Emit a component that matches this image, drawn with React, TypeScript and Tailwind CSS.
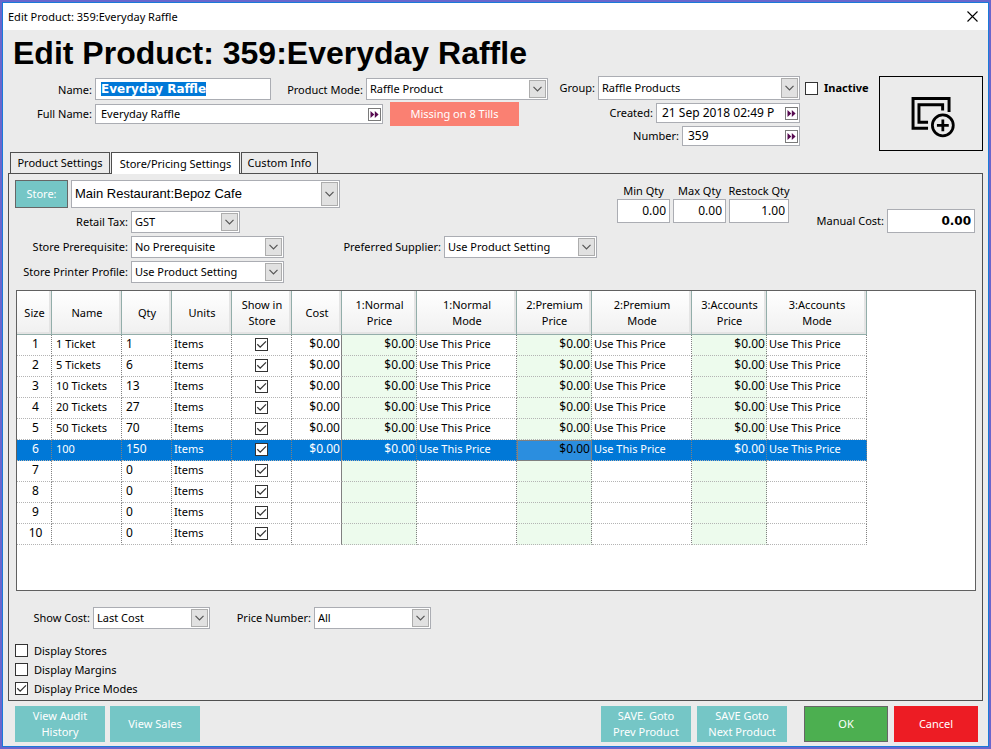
import React, { useEffect, useRef } from "react";

interface PriceRow {
  size: number;
  name: string;
  qty: string;
  units: string;
  priced: boolean;
}

const rows: PriceRow[] = [
  { size: 1, name: "1 Ticket", qty: "1", units: "Items", priced: true },
  { size: 2, name: "5 Tickets", qty: "6", units: "Items", priced: true },
  { size: 3, name: "10 Tickets", qty: "13", units: "Items", priced: true },
  { size: 4, name: "20 Tickets", qty: "27", units: "Items", priced: true },
  { size: 5, name: "50 Tickets", qty: "70", units: "Items", priced: true },
  { size: 6, name: "100", qty: "150", units: "Items", priced: true },
  { size: 7, name: "", qty: "0", units: "Items", priced: false },
  { size: 8, name: "", qty: "0", units: "Items", priced: false },
  { size: 9, name: "", qty: "0", units: "Items", priced: false },
  { size: 10, name: "", qty: "0", units: "Items", priced: false },
];

const SELECTED_SIZE = 6;

const columns = [
  { title: ["Size"], width: "w-[35px]" },
  { title: ["Name"], width: "w-[70px]" },
  { title: ["Qty"], width: "w-[50px]" },
  { title: ["Units"], width: "w-[60px]" },
  { title: ["Show in", "Store"], width: "w-[60px]" },
  { title: ["Cost"], width: "w-[50px]" },
  { title: ["1:Normal", "Price"], width: "w-[75px]" },
  { title: ["1:Normal", "Mode"], width: "w-[100px]" },
  { title: ["2:Premium", "Price"], width: "w-[75px]" },
  { title: ["2:Premium", "Mode"], width: "w-[100px]" },
  { title: ["3:Accounts", "Price"], width: "w-[75px]" },
  { title: ["3:Accounts", "Mode"], width: "w-[100px]" },
];

interface ComboProps {
  id: string;
  value: string;
  className: string;
}

const Combo = ({ id, value, className }: ComboProps) => (
  <div className={`relative shrink-0 border border-[#abadb3] bg-white ${className}`}>
    <select
      id={id}
      defaultValue={value}
      className="block h-full w-full appearance-none bg-transparent pb-px pl-[3px] pr-5 outline-none"
    >
      <option value={value}>{value}</option>
    </select>
    <span className="pointer-events-none absolute inset-y-px right-px flex w-[17px] items-center justify-center border border-[#adadad] bg-[#e1e1e1]">
      <svg width="9" height="6" viewBox="0 0 9 6" fill="none" stroke="#555" strokeWidth="1.2">
        <path d="M0.5 0.8 L4.5 4.8 L8.5 0.8" />
      </svg>
    </span>
  </div>
);

interface LookupProps {
  id: string;
  value: string;
  className: string;
}

// text box with the small double arrow button on its right
const Lookup = ({ id, value, className }: LookupProps) => (
  <div className={`flex h-5 shrink-0 items-center border border-[#abadb3] bg-white pr-px ${className}`}>
    <input
      id={id}
      type="text"
      defaultValue={value}
      className="h-full w-full min-w-0 bg-transparent pb-px pl-[5px] outline-none"
    />
    <button
      type="button"
      aria-label="More"
      className="flex h-[13px] w-[13px] shrink-0 items-center justify-center border border-[#7a7a7a] bg-white"
    >
      <svg width="9" height="7" viewBox="0 0 9 7" fill="#570a50">
        <path d="M0.5 0 L4.3 3.5 L0.5 7 Z M4.8 0 L8.6 3.5 L4.8 7 Z" />
      </svg>
    </button>
  </div>
);

interface CheckProps {
  id: string;
  checked?: boolean;
  label?: string;
}

const Check = ({ id, checked, label }: CheckProps) => (
  <span className="relative block h-[13px] w-[13px] shrink-0">
    <input
      id={id}
      type="checkbox"
      aria-label={label}
      defaultChecked={checked}
      className="peer block h-[13px] w-[13px] appearance-none border border-[#333] bg-white"
    />
    <svg
      className="pointer-events-none absolute inset-0 hidden peer-checked:block"
      width="13"
      height="13"
      viewBox="0 0 13 13"
      fill="none"
      stroke="#333"
      strokeWidth="1.3"
    >
      <path d="M2.3 6.3 L5.2 9.2 L11 3.4" />
    </svg>
  </span>
);

interface QtyProps {
  id: string;
  label: string;
  value: string;
  className: string;
}

const QtyBox = ({ id, label, value, className }: QtyProps) => (
  <div className={`flex flex-col items-center ${className}`}>
    <label htmlFor={id} className="whitespace-nowrap leading-4">
      {label}
    </label>
    <input
      id={id}
      type="text"
      defaultValue={value}
      className="h-6 w-full border border-[#abadb3] bg-white px-[3px] pb-px text-right text-xs outline-none"
    />
  </div>
);

const Header = () => {
  const nameRef = useRef<HTMLInputElement>(null);

  useEffect(() => {
    nameRef.current?.focus();
    nameRef.current?.select();
  }, []);

  return (
    <div className="flex items-start px-[5px]">
      <div className="flex flex-col gap-[2px]">
        <div className="flex h-6 items-end">
          <label htmlFor="name" className="w-[84px] pb-[2px] text-right">
            Name:
          </label>
          <input
            ref={nameRef}
            id="name"
            type="text"
            defaultValue="Everyday Raffle"
            className="ml-[3px] h-[22px] w-[176px] border border-[#abadb3] bg-white px-[5px] font-['DejaVu_Sans'] text-xs font-bold outline-none selection:bg-[#0078d7] selection:text-white"
          />
          <label htmlFor="mode" className="w-[92px] whitespace-nowrap pb-[2px] text-right">
            Product Mode:
          </label>
          <Combo id="mode" value="Raffle Product" className="ml-[3px] h-[22px] w-[182px]" />
        </div>
        <div className="flex h-6 items-center">
          <label htmlFor="fullname" className="w-[84px] text-right">
            Full Name:
          </label>
          <Lookup id="fullname" value="Everyday Raffle" className="ml-[3px] w-[288px]" />
          <button type="button" className="ml-[7px] h-6 w-[129px] bg-[#fa8072] text-white">
            Missing on 8 Tills
          </button>
        </div>
      </div>

      <div className="ml-[7px] flex flex-col items-end gap-[3px]">
        <div className="flex w-[245px] items-center justify-end gap-[3px]">
          <label htmlFor="group">Group:</label>
          <Combo id="group" value="Raffle Products" className="h-6 w-[202px]" />
        </div>
        <div className="flex items-center gap-[3px]">
          <label htmlFor="created">Created:</label>
          <Lookup id="created" value="21 Sep 2018 02:49 P" className="w-[144px] text-xs" />
        </div>
        <div className="flex items-center gap-[3px]">
          <label htmlFor="number">Number:</label>
          <Lookup id="number" value="359" className="w-[118px] text-xs" />
        </div>
      </div>

      <div className="ml-[5px] flex h-6 items-center gap-[6px]">
        <Check id="inactive" />
        <label htmlFor="inactive" className="font-bold">
          Inactive
        </label>
      </div>

      <button type="button" aria-label="Add picture" className="ml-auto h-[75px] w-[104px] border border-black">
        <svg className="block h-full w-full" viewBox="1 1 102 74" fill="none" stroke="#000">
          <path strokeWidth="3" d="M70.3 36.5 V22.8 H33.8 V53 H49" />
          <path strokeWidth="3" d="M63.8 35 V29.2 H39.8 V46.8 H49" />
          <circle cx="64" cy="50" r="10.6" strokeWidth="2.8" />
          <path strokeWidth="2.8" d="M64 44 V56 M58 50 H70" />
        </svg>
      </button>
    </div>
  );
};

const Tabs = () => (
  <div role="tablist" className="relative z-10 -mb-px mt-px flex gap-px px-[7px]">
    <button type="button" role="tab" aria-selected="false" className="h-[22px] w-[100px] whitespace-nowrap border border-[#4f4f4f]">
      Product Settings
    </button>
    <button
      type="button"
      role="tab"
      aria-selected="true"
      className="h-[22px] w-[129px] whitespace-nowrap border border-b-0 border-[#4f4f4f] bg-white"
    >
      Store/Pricing Settings
    </button>
    <button type="button" role="tab" aria-selected="false" className="h-[22px] w-[77px] whitespace-nowrap border border-[#4f4f4f]">
      Custom Info
    </button>
  </div>
);

const StoreFields = () => (
  <div className="flex items-start pl-[6px] pr-[7px] pt-[6px]">
    <div className="flex flex-col gap-[3px]">
      <div className="flex gap-[3px]">
        <button type="button" className="h-7 w-[53px] border border-[#666] bg-[#75c6c6] text-white">
          Store:
        </button>
        <Combo
          id="store"
          value="Main Restaurant:Bepoz Cafe"
          className="h-7 w-[269px] font-['Liberation_Sans'] text-[13px]"
        />
      </div>
      <div className="flex items-center gap-[3px]">
        <label htmlFor="tax" className="w-[113px] text-right">
          Retail Tax:
        </label>
        <Combo id="tax" value="GST" className="h-[22px] w-[109px]" />
      </div>
      <div className="flex items-center gap-[3px]">
        <label htmlFor="prereq" className="w-[113px] text-right">
          Store Prerequisite:
        </label>
        <Combo id="prereq" value="No Prerequisite" className="h-[22px] w-[153px]" />
        <label htmlFor="supplier" className="w-[154px] text-right">
          Preferred Supplier:
        </label>
        <Combo id="supplier" value="Use Product Setting" className="h-[22px] w-[153px]" />
      </div>
      <div className="flex items-center gap-[3px]">
        <label htmlFor="printer" className="w-[113px] whitespace-nowrap text-right">
          Store Printer Profile:
        </label>
        <Combo id="printer" value="Use Product Setting" className="h-[22px] w-[153px]" />
      </div>
    </div>

    <div className="ml-auto flex gap-[3px] pt-[3px]">
      <QtyBox id="minqty" label="Min Qty" value="0.00" className="w-[53px]" />
      <QtyBox id="maxqty" label="Max Qty" value="0.00" className="w-[53px]" />
      <QtyBox id="restock" label="Restock Qty" value="1.00" className="w-[60px]" />
    </div>
    <div className="ml-[25px] flex items-center gap-[3px] pt-[29px]">
      <label htmlFor="manual" className="w-[70px] text-right">
        Manual Cost:
      </label>
      <input
        id="manual"
        type="text"
        defaultValue="0.00"
        className="h-6 w-[88px] border border-[#abadb3] bg-white px-[3px] text-right font-['DejaVu_Sans'] text-xs font-bold outline-none"
      />
    </div>
  </div>
);

const PriceTable = () => (
  <table className="w-[850px] table-fixed border-separate border-spacing-0">
    <thead>
      <tr className="h-11">
        {columns.map((col) => (
          <th
            key={col.title.join(" ")}
            className={`${col.width} border-b border-r border-[#93aeaa] bg-gradient-to-b from-white to-[#f0f0f0] p-0 pl-px font-normal leading-4 shadow-[inset_-2px_-2px_0_#e4e4e4]`}
          >
            {col.title.map((line) => (
              <div key={line} className="whitespace-nowrap">
                {line}
              </div>
            ))}
          </th>
        ))}
      </tr>
    </thead>
    <tbody>
      {rows.map((row) => {
        const selected = row.size === SELECTED_SIZE;
        const cell = "whitespace-nowrap border-b border-r border-dotted border-b-[#b4b4b4] border-r-[#808080] p-0 pb-[2px]";
        const green = selected ? "" : "bg-[#edfbed]";
        const price = row.priced ? "$0.00" : "";
        const mode = row.priced ? "Use This Price" : "";
        return (
          <tr key={row.size} className={`h-[21px] leading-[18px] ${selected ? "bg-[#0078d7] text-white" : ""}`}>
            <td className={`${cell} pl-[3px] text-center text-[12px]`}>{row.size}</td>
            <td className={`${cell} pl-1`}>{row.name}</td>
            <td className={`${cell} pl-1 text-[12px]`}>{row.qty}</td>
            <td className={`${cell} pl-[2px]`}>{row.units}</td>
            <td className="border-b border-r border-dotted border-b-[#b4b4b4] border-r-[#808080] p-0 pb-px">
              <div className="flex justify-center">
                <Check id={`show-${row.size}`} label={`Show size ${row.size} in store`} checked />
              </div>
            </td>
            <td className={`${cell} pr-px text-right text-[12px] [border-right-style:solid]`}>{price}</td>
            <td className={`${cell} ${green} pr-px text-right text-[12px]`}>{price}</td>
            <td className={`${cell} pl-[2px]`}>{mode}</td>
            <td
              className={`${cell} pr-px text-right text-[12px] ${
                selected ? "bg-[#2b8edf] text-black outline outline-1 -outline-offset-1 outline-[#808080]" : green
              }`}
            >
              {price}
            </td>
            <td className={`${cell} pl-[2px]`}>{mode}</td>
            <td className={`${cell} ${green} pr-px text-right text-[12px]`}>{price}</td>
            <td className={`${cell} pl-[2px]`}>{mode}</td>
          </tr>
        );
      })}
    </tbody>
  </table>
);

const displayOptions = [
  { id: "stores", label: "Display Stores", checked: false },
  { id: "margins", label: "Display Margins", checked: false },
  { id: "modes", label: "Display Price Modes", checked: true },
];

const Footer = () => (
  <div className="flex items-start pl-[12px] pr-[10px] pb-1 pt-[5px] leading-4 text-white">
    <button type="button" className="h-9 w-[90px] bg-[#75c6c6]">
      View Audit
      <br />
      History
    </button>
    <button type="button" className="ml-[5px] h-9 w-[90px] bg-[#75c6c6]">
      View Sales
    </button>
    <button type="button" className="ml-auto h-9 w-[90px] bg-[#75c6c6]">
      SAVE. Goto
      <br />
      Prev Product
    </button>
    <button type="button" className="ml-[6px] h-9 w-[90px] bg-[#75c6c6]">
      SAVE Goto
      <br />
      Next Product
    </button>
    <button type="button" className="ml-[17px] h-9 w-[84px] border border-[#666] bg-[#4caf50]">
      OK
    </button>
    <button type="button" className="ml-[6px] h-9 w-[84px] bg-[#ed1c24]">
      Cancel
    </button>
  </div>
);

const App = () => {
  return (
    <div className="flex min-h-screen border-2 border-[#6a66cc] font-['Noto_Sans',sans-serif] text-[11px] leading-4 text-black">
      <div className="flex min-w-0 flex-1 flex-col border border-[#1a7ad9] bg-[#ebebeb]">
        <div className="flex h-[27px] items-center justify-between bg-white pl-[5px] pr-[10px]">
          <span>Edit Product: 359:Everyday Raffle</span>
          <button type="button" aria-label="Close">
            <svg width="11" height="11" viewBox="0 0 11 11" stroke="#000" strokeWidth="1.1">
              <path d="M0.5 0.5 L10.5 10.5 M10.5 0.5 L0.5 10.5" />
            </svg>
          </button>
        </div>
        <h1 className="pl-[10px] font-['Liberation_Sans'] text-[32px] font-bold leading-[46px]">
          Edit Product: 359:Everyday Raffle
        </h1>
        <Header />
        <Tabs />
        <div className="mx-[5px] flex flex-1 flex-col border border-[#4f4f4f]">
          <StoreFields />
          <div className="ml-[7px] mr-[6px] mt-[7px] flex-1 border border-[#606060] bg-white">
            <PriceTable />
          </div>
          <div className="flex items-center gap-[3px] pl-[23px] pt-4">
            <label htmlFor="showcost" className="w-[58px] text-right">
              Show Cost:
            </label>
            <Combo id="showcost" value="Last Cost" className="h-[22px] w-[117px]" />
            <label htmlFor="pricenumber" className="w-[98px] text-right">
              Price Number:
            </label>
            <Combo id="pricenumber" value="All" className="h-[22px] w-[117px]" />
          </div>
          <div className="px-[6px] pb-[2px] pt-3">
            {displayOptions.map((opt) => (
              <div key={opt.id} className="flex h-[19px] items-center gap-[6px]">
                <Check id={opt.id} checked={opt.checked} />
                <label htmlFor={opt.id}>{opt.label}</label>
              </div>
            ))}
          </div>
        </div>
        <Footer />
      </div>
    </div>
  );
};

export default App;
